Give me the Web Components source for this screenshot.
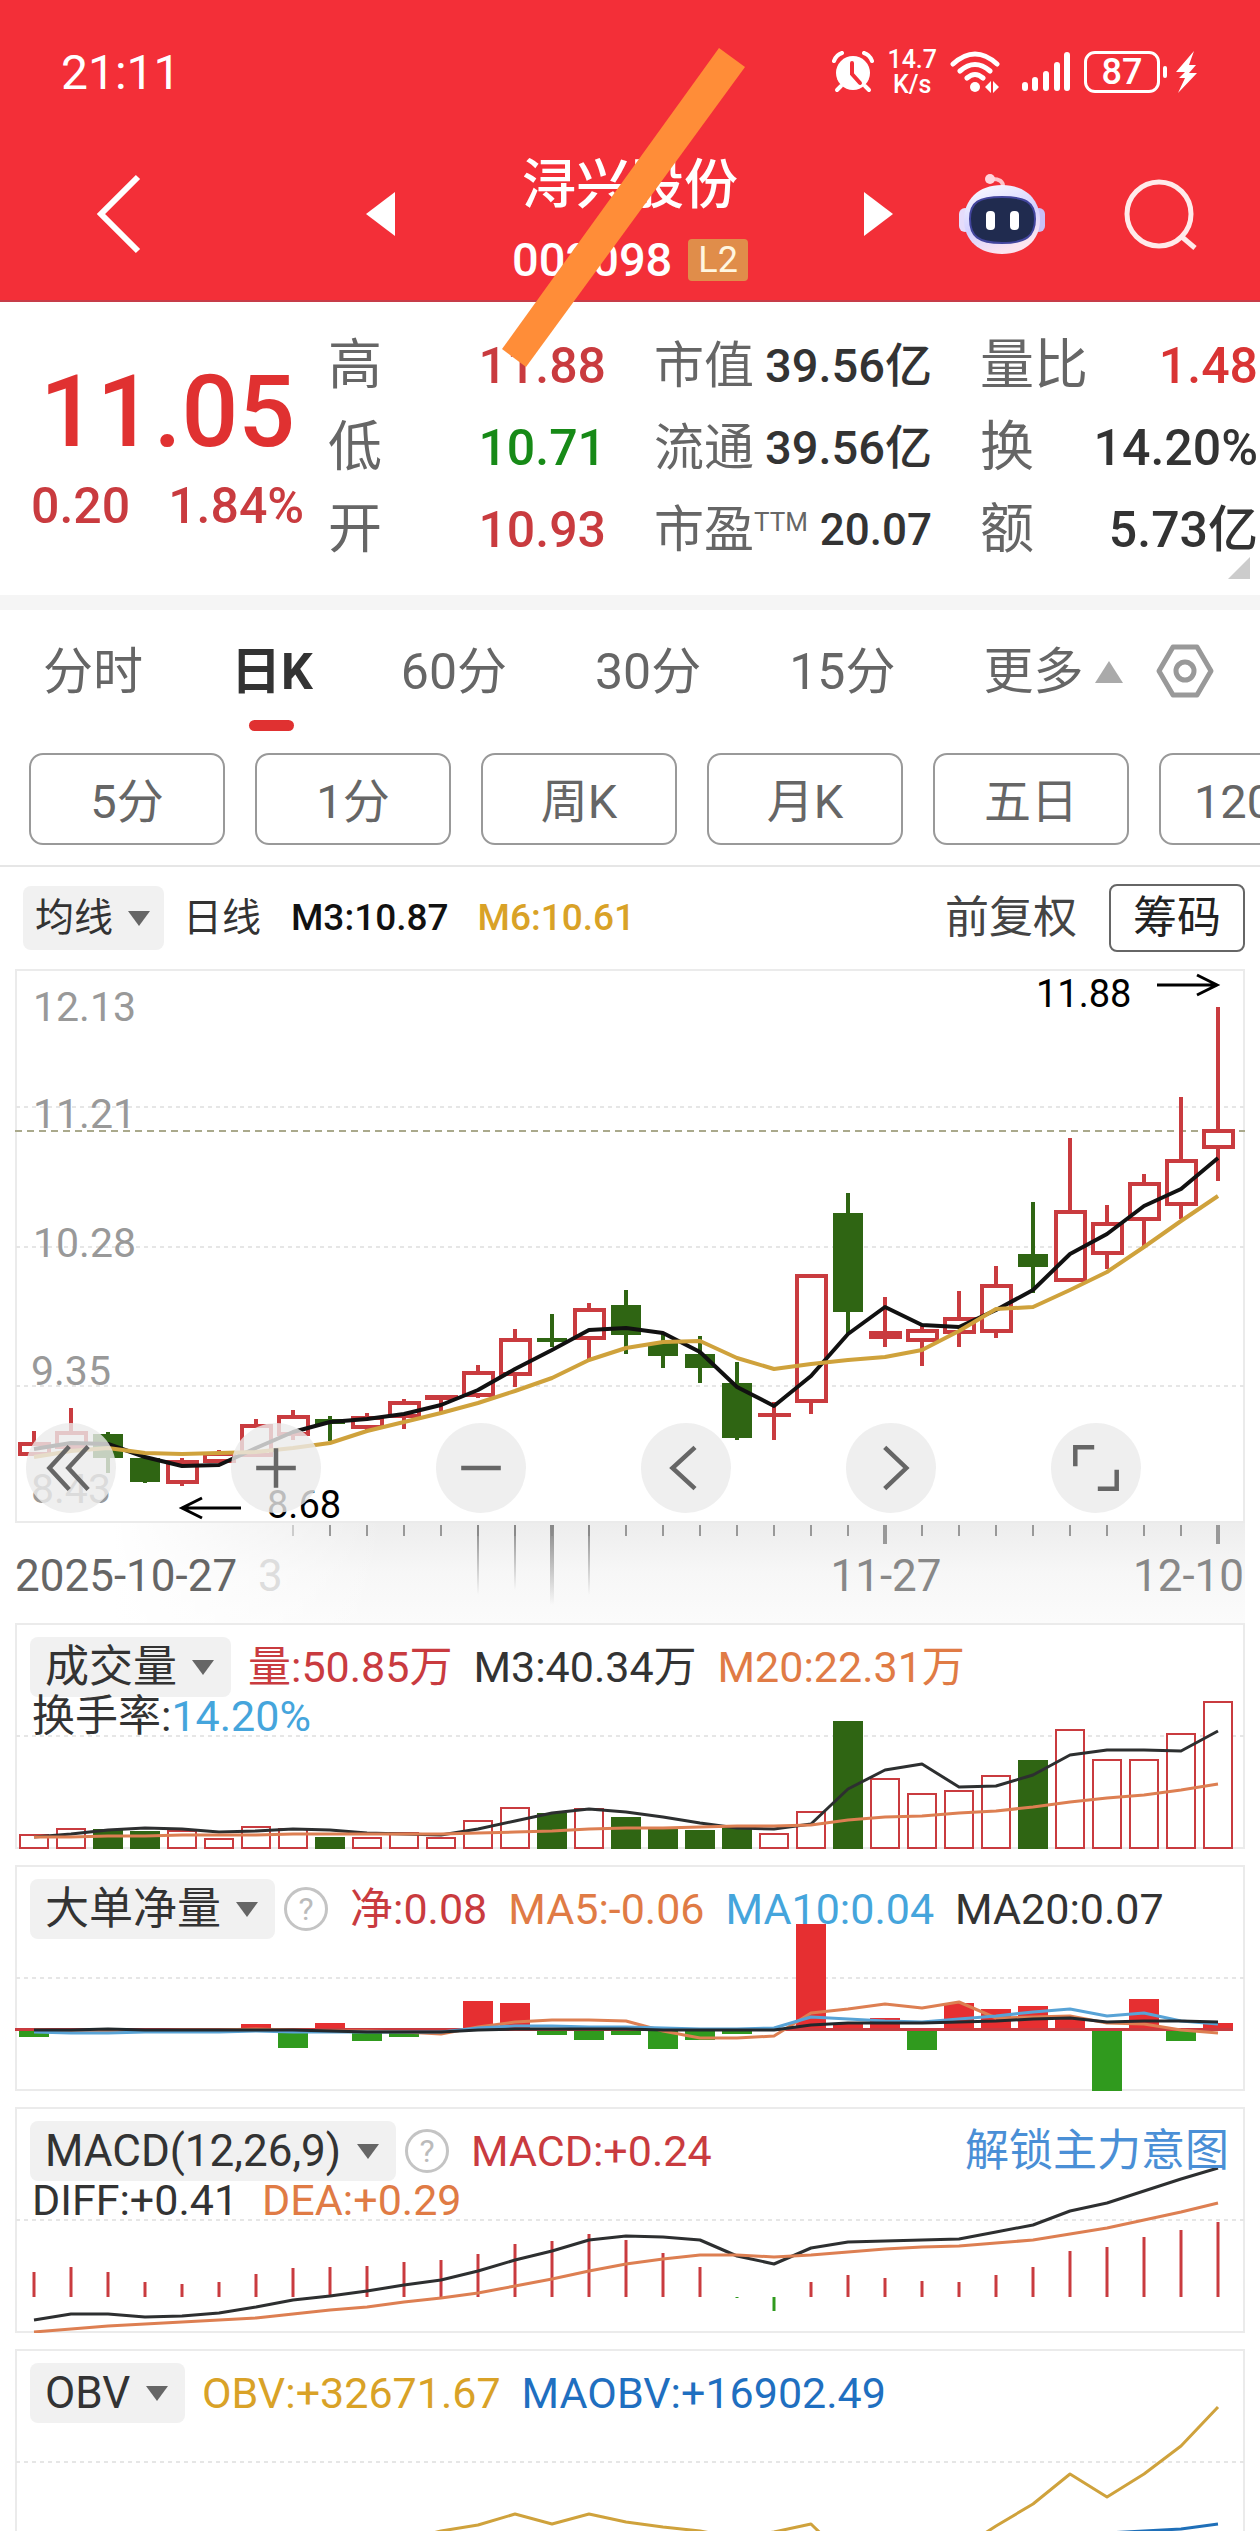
<!DOCTYPE html>
<html lang="zh-CN">
<head>
<meta charset="utf-8">
<meta name="viewport" content="width=device-width, initial-scale=1">
<title>浔兴股份 002098</title>
<style>
  body {
    margin: 0;
    background: #fff;
    color: #333;
    font-family: Roboto, "Noto Sans CJK SC", sans-serif;
  }
</style>
</head>
<body>
<stock-app></stock-app>

<script>
const RED = "#c93b3f";
const GREEN = "#2f6513";
const STEP = 37;
const barX = (i) => 34 + STEP * i;

// points is a list of y values, one per trading day
const line = (points, color, width = 4, from = 0) =>
  `<polyline fill="none" stroke="${color}" stroke-width="${width}" stroke-linejoin="round" points="${points
    .map((y, i) => `${barX(i + from)},${y}`)
    .join(" ")}"/>`;

const grid = (y) =>
  `<line x1="16" x2="1244" y1="${y}" y2="${y}" stroke="#e6e6e6" stroke-width="2" stroke-dasharray="4 4"/>`;

class BaseElement extends HTMLElement {
  constructor() {
    super();
    this.attachShadow({ mode: "open" });
  }

  connectedCallback() {
    this.shadowRoot.innerHTML = `<style>${this.styles()}</style>${this.render()}`;
  }

  styles() {
    return ":host { display: block; }";
  }

  render() {
    return "<slot></slot>";
  }
}

class StatusBar extends BaseElement {
  styles() {
    return `
      :host { display: flex; align-items: center; justify-content: space-between; height: 56px; padding: 44px 62px 0 61px; color: #fff; }
      time { font-size: 48px; }
      .icons { display: flex; align-items: center; gap: 13px; }
      .speed { font-size: 25px; line-height: 26px; text-align: center; font-weight: 500; }
      .speed div { height: 25px; }
      .battery { display: flex; align-items: center; gap: 3px; }
      .level { box-sizing: border-box; width: 76px; height: 42px; border: 3px solid #fff; border-radius: 11px; font-size: 36px; line-height: 37px; text-align: center; font-weight: 500; }
      .nub { width: 4px; height: 12px; border-radius: 2px; background: #fff; }
      .signal { margin-left: 8px; }
      svg { display: block; }
    `;
  }

  render() {
    return `
      <time>21:11</time>
      <div class="icons">
        <svg width="42" height="42" viewBox="0 0 42 42" fill="none" stroke="#fff">
          <circle cx="21" cy="22" r="17" fill="#fff" stroke="none"/>
          <path d="M2 10Q4 4 10 2M40 10Q38 4 32 2" stroke-width="4" stroke-linecap="round"/>
          <path d="M9 35L5 39M33 35L37 39" stroke-width="4" stroke-linecap="round"/>
          <path d="M20 12V23L28 32" stroke="#f32f38" stroke-width="4" stroke-linecap="round"/>
        </svg>
        <div class="speed"><div>14.7</div><div>K/s</div></div>
        <svg width="50" height="42" viewBox="0 0 50 42" fill="none" stroke="#fff" stroke-width="5" stroke-linecap="round">
          <path d="M3 13Q25 -7 47 13M10 20Q25 7 40 20M17 27Q25 20 33 27"/>
          <circle cx="25" cy="36" r="5" fill="#fff" stroke="none"/>
          <path d="M41 30v12l-6-6zM43 30v12l6-6z" fill="#fff" stroke="none"/>
        </svg>
        <svg class="signal" width="50" height="42" viewBox="0 0 50 42" stroke="#fff" stroke-width="6" stroke-linecap="round">
          <path d="M4 34V37M14 29V37M25 23V37M36 14V37M46 4V37"/>
        </svg>
        <div class="battery"><div class="level">87</div><div class="nub"></div>
          <svg width="28" height="44" viewBox="2 0 28 44" fill="#fff"><path d="M26 1L8 22h9l-6 6h6L10 43l19-20h-8l7-8h-7z"/></svg>
        </div>
      </div>
    `;
  }
}

class StockHeader extends BaseElement {
  styles() {
    return `
      :host { display: grid; grid-template-columns: 1fr auto 1fr; align-items: center; height: 200px; border-bottom: 2px solid #c73c49; color: #fff; }
      button { display: block; border: 0; padding: 0; background: none; color: inherit; }
      svg { display: block; }
      .side { display: flex; align-items: center; justify-content: space-between; }
      .left { padding: 28px 117px 0 94px; }
      .right { padding: 28px 61px 0 116px; }
      .right .robot { padding-right: 12px; }
      .title { text-align: center; padding-top: 44px; }
      h1 { margin: 0; font-size: 54px; line-height: 76px; font-weight: 500; }
      .code { display: flex; justify-content: center; align-items: center; gap: 16px; font-size: 47px; line-height: 72px; font-weight: 500; }
      .badge { padding: 0 10px; border-radius: 4px; background: #e08d4a; color: #fff6e0; font-size: 36px; line-height: 42px; font-weight: 400; }
    `;
  }

  render() {
    return `
      <div class="side left">
        <button aria-label="返回"><svg width="48" height="80" viewBox="0 0 48 80" fill="none" stroke="#fff" stroke-width="6"><path d="M44 3L7 40L44 77"/></svg></button>
        <button aria-label="上一只"><svg width="29" height="44" viewBox="0 0 29 44" fill="#fff"><path d="M29 0V44L0 22z"/></svg></button>
      </div>
      <div class="title">
        <h1>浔兴股份</h1>
        <div class="code"><span>002098</span><span class="badge">L2</span></div>
      </div>
      <div class="side right">
        <button aria-label="下一只"><svg width="29" height="44" viewBox="0 0 29 44" fill="#fff"><path d="M0 0V44L29 22z"/></svg></button>
        <button class="robot" aria-label="智能助手">
          <svg width="88" height="82" viewBox="0 0 88 82">
            <defs><linearGradient id="shell" x1="0" y1="0" x2="0.4" y2="1"><stop offset="0" stop-color="#fff"/><stop offset="0.6" stop-color="#d3d0ff"/><stop offset="1" stop-color="#fbe4f0"/></linearGradient></defs>
            <path d="M45 15Q46 5 32 6" fill="none" stroke="#ffc4cb" stroke-width="4"/>
            <circle cx="32" cy="6" r="5" fill="#ffd5dc"/>
            <rect x="1" y="35" width="12" height="24" rx="6" fill="#e5dcfb"/>
            <rect x="75" y="35" width="12" height="24" rx="6" fill="#c9bff6"/>
            <path d="M44 12C68 12 82 27 82 47S67 81 44 81S6 67 6 47S20 12 44 12z" fill="url(#shell)"/>
            <path d="M44 24C67 24 77 29 77 46S68 70 44 70S12 63 12 46S21 24 44 24z" fill="#202b4f" stroke="#42459d" stroke-width="2"/>
            <rect x="28" y="38" width="9" height="19" rx="4" fill="#fff"/>
            <rect x="52" y="38" width="9" height="19" rx="4" fill="#fff"/>
          </svg>
        </button>
        <button aria-label="搜索"><svg width="76" height="72" viewBox="0 0 76 72" fill="none" stroke="#ffeaea" stroke-width="5"><circle cx="36" cy="36" r="32"/><path d="M59 59L72 70"/></svg></button>
      </div>
    `;
  }
}

class StatItem extends BaseElement {
  styles() {
    return `
      :host { display: flex; justify-content: space-between; align-items: center; white-space: nowrap; line-height: 82px; }
      .label { color: #666; font-size: 54px; }
      .value { color: var(--tone, #333); font-size: 50px; font-weight: 500; }
      :host([compact]) .label { font-size: 50px; }
      :host([compact]) .value { font-size: 47px; }
      :host([note]) .value { font-size: 44px; }
      sup { font-size: 26px; line-height: 26px; vertical-align: 16px; }
    `;
  }

  render() {
    const note = this.getAttribute("note");
    return `<span class="label">${this.getAttribute("label")}${note ? `<sup>${note}</sup>` : ""}</span><span class="value"><slot></slot></span>`;
  }
}

class QuoteSummary extends BaseElement {
  styles() {
    return `
      :host { display: grid; grid-template-columns: 280px 1fr 1fr 1fr; gap: 48px; padding: 23px 2px 24px 0; position: relative; border-bottom: 15px solid #f5f5f5; }
      .price { color: #e03131; font-size: 100px; line-height: 100px; font-weight: 500; text-align: center; padding: 37px 0 0 40px; }
      .change { display: flex; gap: 38px; padding-left: 31px; color: ${RED}; font-size: 50px; line-height: 88px; font-weight: 500; white-space: nowrap; }
      .corner { position: absolute; right: 10px; bottom: 16px; width: 22px; height: 22px; background: #ccc; clip-path: polygon(100% 0, 100% 100%, 0 100%); }
    `;
  }

  render() {
    return `
      <div>
        <div class="price">11.05</div>
        <div class="change"><span>0.20</span><span>1.84%</span></div>
      </div>
      <div>
        <stat-item label="高" style="--tone: ${RED}">11.88</stat-item>
        <stat-item label="低" style="--tone: #178a17">10.71</stat-item>
        <stat-item label="开" style="--tone: ${RED}">10.93</stat-item>
      </div>
      <div>
        <stat-item compact label="市值">39.56亿</stat-item>
        <stat-item compact label="流通">39.56亿</stat-item>
        <stat-item compact label="市盈" note="TTM">20.07</stat-item>
      </div>
      <div>
        <stat-item label="量比" style="--tone: #d93434">1.48</stat-item>
        <stat-item label="换">14.20%</stat-item>
        <stat-item label="额">5.73亿</stat-item>
      </div>
      <div class="corner"></div>
    `;
  }
}

class PeriodTabs extends BaseElement {
  styles() {
    return `
      :host { display: block; border-bottom: 2px solid #e6e6e6; overflow: hidden; }
      button { font: inherit; color: #666; background: none; border: 0; padding: 0; white-space: nowrap; flex: none; }
      nav { display: flex; align-items: flex-start; gap: 88px; padding: 0 43px; height: 143px; }
      nav button { display: grid; justify-items: center; font-size: 50px; line-height: 124px; }
      nav .on { color: #333; font-weight: 700; grid-template-rows: 110px 11px; }
      nav .on::after { content: ""; width: 45px; height: 11px; border-radius: 6px; background: #e03131; }
      nav .more { display: flex; align-items: center; gap: 12px; }
      nav .gear { margin-left: -55px; height: 122px; align-items: center; }
      .pills { display: flex; gap: 30px; padding: 0 29px 20px; }
      .pills button { box-sizing: border-box; width: 196px; height: 92px; padding-bottom: 4px; border: 2px solid #999; border-radius: 14px; font-size: 47px; }
      svg { display: block; }
    `;
  }

  render() {
    const tabs = ["分时", "日K", "60分", "30分", "15分"];
    const pills = ["5分", "1分", "周K", "月K", "五日", "120分"];
    return `
      <nav>
        ${tabs.map((t) => `<button class="${t === "日K" ? "on" : ""}">${t}</button>`).join("")}
        <button class="more">更多<svg width="28" height="22" viewBox="0 0 28 22"><path d="M14 0L28 22H0z" fill="#aaa"/></svg></button>
        <button class="gear" aria-label="设置"><svg width="58" height="56" viewBox="0 0 58 56" fill="none" stroke="#999" stroke-width="5"><path d="M17 4H41L55 28L41 52H17L3 28z" stroke-linejoin="round"/><circle cx="29" cy="28" r="9"/></svg></button>
      </nav>
      <div class="pills">${pills.map((p) => `<button>${p}</button>`).join("")}</div>
    `;
  }
}

class DropTag extends BaseElement {
  styles() {
    return `
      :host { display: inline-grid; flex: none; align-items: center; }
      select { grid-area: 1 / 1; appearance: none; margin: 0; border: 0; border-radius: 8px; background: #f1f1f1; color: #333; font: inherit; height: var(--tag-height, 60px); padding: 0 54px 0 15px; }
      svg { grid-area: 1 / 1; justify-self: end; margin-right: 17px; pointer-events: none; }
      :host([small]) select { padding: 0 50px 0 12px; }
      :host([small]) svg { margin-right: 14px; }
    `;
  }

  render() {
    const label = this.getAttribute("label");
    return `<select aria-label="指标"><option>${label}</option></select>
      <svg width="22" height="15" viewBox="0 0 22 15"><path d="M0 0H22L11 15z" fill="#666"/></svg>`;
  }
}

class HelpButton extends BaseElement {
  styles() {
    return `
      :host { display: block; flex: none; }
      button { box-sizing: border-box; display: block; width: 44px; height: 44px; padding: 0; border: 3px solid #c4c4c4; border-radius: 50%; background: none; color: #bbb; font: inherit; font-size: 32px; line-height: 38px; }
    `;
  }

  render() {
    return `<button aria-label="说明">?</button>`;
  }
}

class AverageBar extends BaseElement {
  styles() {
    return `
      :host { display: flex; align-items: center; height: 102px; padding: 0 15px 0 23px; font-size: 37px; line-height: 64px; white-space: nowrap; font-weight: 500; }
      drop-tag { --tag-height: 64px; font-size: 39px; font-weight: 400; margin-right: 19px; }
      .day { margin-right: 30px; font-size: 39px; font-weight: 400; }
      .m3 { color: #111; margin-right: 29px; }
      .m6 { color: #d9a227; }
      .adjust { margin-left: auto; margin-right: 32px; color: #444; font-size: 44px; font-weight: 400; }
      button { box-sizing: border-box; width: 136px; height: 68px; padding: 0; border: 2px solid #666; border-radius: 8px; background: none; color: #222; font: inherit; font-size: 44px; font-weight: 400; }
    `;
  }

  render() {
    return `<drop-tag small label="均线"></drop-tag><span class="day">日线</span><span class="m3">M3:10.87</span><span class="m6">M6:10.61</span>
      <span class="adjust">前复权</span><button>筹码</button>`;
  }
}

// u = up, d = down; then high, body top, body bottom, low
const CANDLES = [
  ["u", 1431, 1442, 1456, 1456], ["u", 1408, 1431, 1449, 1449], ["d", 1432, 1434, 1458, 1473],
  ["d", 1458, 1458, 1482, 1483], ["u", 1458, 1460, 1484, 1486], ["u", 1450, 1452, 1463, 1463],
  ["u", 1419, 1424, 1457, 1457], ["u", 1410, 1415, 1436, 1440], ["d", 1416, 1419, 1424, 1441],
  ["u", 1413, 1416, 1429, 1430], ["u", 1399, 1401, 1418, 1429], ["u", 1395, 1395, 1400, 1412],
  ["u", 1365, 1371, 1397, 1398], ["u", 1329, 1338, 1376, 1387], ["d", 1314, 1338, 1342, 1347],
  ["u", 1303, 1308, 1340, 1359], ["d", 1290, 1305, 1335, 1354], ["d", 1333, 1343, 1356, 1368],
  ["d", 1336, 1354, 1368, 1383], ["d", 1362, 1383, 1438, 1440], ["u", 1402, 1413, 1417, 1440],
  ["u", 1274, 1274, 1403, 1414], ["d", 1193, 1213, 1312, 1334], ["u", 1297, 1331, 1339, 1347],
  ["u", 1326, 1329, 1342, 1366], ["u", 1291, 1317, 1334, 1347], ["u", 1266, 1284, 1333, 1338],
  ["d", 1202, 1254, 1267, 1293], ["u", 1138, 1210, 1282, 1282], ["u", 1205, 1222, 1255, 1269],
  ["u", 1174, 1182, 1221, 1246], ["u", 1097, 1159, 1206, 1219], ["u", 1007, 1129, 1149, 1181],
];
const MA3 = [1449, 1443, 1444, 1457, 1466, 1465, 1448, 1432, 1422, 1419, 1414, 1405, 1390, 1369, 1350, 1330, 1328, 1333, 1352, 1387, 1406, 1376, 1334, 1307, 1325, 1327, 1310, 1290, 1254, 1234, 1206, 1189, 1158];
const MA6 = [1457, 1451, 1448, 1453, 1454, 1453, 1452, 1448, 1443, 1431, 1422, 1413, 1403, 1391, 1378, 1360, 1348, 1342, 1341, 1358, 1369, 1364, 1360, 1357, 1350, 1331, 1309, 1307, 1290, 1272, 1247, 1221, 1196];

class CandleChart extends BaseElement {
  styles() {
    return `
      :host { display: block; position: relative; box-shadow: inset 0 0 0 2px #ebebeb; }
      svg { display: block; width: 100%; height: auto; }
      .tools { position: absolute; left: 11px; right: 104px; bottom: 10px; display: flex; justify-content: space-between; }
      .tools button { width: 90px; height: 90px; padding: 0; border: 0; border-radius: 50%; background: #ebebebcc; }
    `;
  }

  candle([dir, high, top, bottom, low], i) {
    const x = barX(i);
    const up = dir === "u";
    const color = up ? RED : GREEN;
    const wicks = `<path d="M${x} ${high}V${top}M${x} ${bottom}V${low}" stroke="${color}" stroke-width="4"/>`;
    if (!up) return wicks + `<rect x="${x - 15}" y="${top}" width="30" height="${bottom - top}" fill="${color}"/>`;
    if (bottom - top < 9) return wicks + `<rect x="${x - 16}" y="${top}" width="33" height="${bottom - top}" fill="${color}"/>`;
    return wicks + `<rect x="${x - 14}" y="${top + 2}" width="29" height="${bottom - top - 4}" fill="#fff" stroke="${color}" stroke-width="4"/>`;
  }

  render() {
    const labels = [[33, 1021, "12.13"], [33, 1128, "11.21"], [33, 1257, "10.28"], [31, 1385, "9.35"], [31, 1503, "8.43"]];
    const icons = [
      ["更早", "M48 26L26 50L48 74M69 26L47 50L69 74"],
      ["放大", "M50 28V72M28 50H72"],
      ["缩小", "M28 50H72"],
      ["左移", "M60 27L35 50L60 73"],
      ["右移", "M43 27L67 50L43 73"],
      ["全屏", "M27 48V27H48M73 52V73H52"],
    ];
    return `
      <svg viewBox="15 969 1230 554">
        ${[1107, 1247, 1386].map(grid).join("")}
        <g fill="#999" font-size="41">${labels.map(([x, y, t]) => `<text x="${x}" y="${y}">${t}</text>`).join("")}</g>
        <line x1="15" x2="1245" y1="1131" y2="1131" stroke="#aaa98c" stroke-width="2" stroke-dasharray="7 5"/>
        ${CANDLES.map((c, i) => this.candle(c, i)).join("")}
        ${line(MA3, "#111")}
        ${line(MA6, "#cfa23c")}
        <g font-size="38" fill="#000"><text x="1036" y="1007">11.88</text><text x="267" y="1518">8.68</text></g>
        <path d="M1157 985H1216M1197 975L1217 985L1197 995M241 1508H183M202 1498L182 1508L202 1518" fill="none" stroke="#000" stroke-width="3"/>
      </svg>
      <div class="tools">
        ${icons.map(([name, d]) => `<button aria-label="${name}"><svg viewBox="0 0 100 100" fill="none" stroke="#666" stroke-width="5"><path d="${d}"/></svg></button>`).join("")}
      </div>
    `;
  }
}

class DateAxis extends BaseElement {
  styles() {
    return `
      :host { display: block; background: linear-gradient(90deg, #fff 8%, transparent 30%), linear-gradient(#ededed, #f7f7f7 50%, #fbfbfb); }
      svg { display: block; width: 100%; height: auto; }
    `;
  }

  render() {
    let ticks = "";
    for (let i = 7; i < 33; i++) {
      const major = i === 23 || i === 32;
      ticks += `<path d="M${barX(i)} 1525v${major ? 19 : 11}" stroke="${i < 8 ? "#ccc" : "#999"}" stroke-width="${major ? 4 : 2}"/>`;
    }
    const trails = [[12, 70, 2], [13, 65, 2], [14, 80, 4], [15, 70, 2]]
      .map(([i, h, w]) => `<rect x="${barX(i) - w / 2}" y="1525" width="${w}" height="${h}" fill="url(#fade)"/>`)
      .join("");
    return `
      <svg viewBox="15 1523 1230 100">
        <defs><linearGradient id="fade" x1="0" y1="0" x2="0" y2="1"><stop offset="0" stop-color="#888"/><stop offset="1" stop-color="#888" stop-opacity="0"/></linearGradient></defs>
        ${ticks}${trails}
        <g font-size="44" fill="#888">
          <text x="258" y="1591" fill="#ddd">3</text>
          <text x="15" y="1591" fill="#666">2025-10-27</text>
          <text x="886" y="1591" text-anchor="middle">11-27</text>
          <text x="1244" y="1591" text-anchor="end">12-10</text>
        </g>
      </svg>
    `;
  }
}

// Frame shared by all sub-charts: a chart with its legend laid over it
class IndicatorPanel extends BaseElement {
  styles() {
    return `
      :host { display: grid; flex: none; box-shadow: inset 0 0 0 2px #ebebeb; font-size: 43px; white-space: nowrap; }
      .chart, .legend { grid-area: 1 / 1; min-width: 0; }
      .legend { padding: 14px 16px 0 15px; }
      .row { display: flex; align-items: center; height: 60px; line-height: 60px; }
      .more { display: flex; align-items: center; gap: 24px; height: 38px; line-height: 38px; padding-left: 2px; }
      ::slotted(drop-tag) { margin-right: 17px; font-size: 44px; }
      ::slotted(help-button) { margin-right: 22px; margin-left: -8px; }
      ::slotted(span) { margin-right: 21px; }
      ::slotted(a) { margin-left: auto; color: #4a8fd6; text-decoration: none; font-size: 44px; }
      ::slotted([slot="more"]) { margin-right: 0; }
    `;
  }

  render() {
    return `<div class="chart"><slot name="chart"></slot></div>
      <div class="legend"><div class="row"><slot></slot></div><div class="more"><slot name="more"></slot></div></div>`;
  }
}

class SubChart extends BaseElement {
  styles() {
    return `
      :host { display: block; }
      svg { display: block; width: 100%; height: auto; }
    `;
  }

  frame(top, middle, body) {
    return `<svg viewBox="15 ${top} 1230 226">${grid(middle)}${body}</svg>`;
  }
}

class VolumeChart extends SubChart {
  render() {
    const tops = [1834, 1828, 1829, 1831, 1830, 1838, 1826, 1828, 1837, 1837, 1832, 1837, 1820, 1807, 1813, 1808, 1817, 1828, 1830, 1828, 1833, 1811, 1721, 1778, 1793, 1790, 1775, 1760, 1729, 1759, 1759, 1733, 1701];
    const down = [2, 3, 8, 14, 16, 17, 18, 19, 22, 27];
    const m3 = [1837, 1834, 1830, 1828, 1829, 1832, 1831, 1829, 1830, 1833, 1834, 1835, 1829, 1821, 1813, 1809, 1812, 1817, 1823, 1828, 1829, 1824, 1789, 1770, 1764, 1787, 1786, 1775, 1755, 1750, 1750, 1751, 1731];
    const m20 = [1837, 1837, 1836, 1836, 1835, 1835, 1835, 1834, 1834, 1834, 1834, 1834, 1833, 1832, 1831, 1829, 1828, 1828, 1827, 1826, 1826, 1825, 1820, 1817, 1816, 1813, 1811, 1807, 1802, 1798, 1795, 1790, 1784];
    const bars = tops.map((y, i) =>
      down.includes(i)
        ? `<rect x="${barX(i) - 15}" y="${y}" width="30" height="${1849 - y}" fill="${GREEN}"/>`
        : `<rect x="${barX(i) - 14}" y="${y + 1}" width="28" height="${1847 - y}" fill="#fff" stroke="${RED}" stroke-width="2"/>`
    );
    return this.frame(1623, 1736, bars.join("") + line(m3, "#2d2f30", 3) + line(m20, "#dd7f52", 3));
  }
}

class NetFlowChart extends SubChart {
  render() {
    const base = 2031;
    const ends = { 0: 2037, 6: 2024, 7: 2048, 8: 2023, 9: 2041, 10: 2037, 12: 2001, 13: 2003, 14: 2035, 15: 2040, 16: 2035, 17: 2049, 18: 2040, 19: 2034, 21: 1924, 22: 2023, 23: 2018, 24: 2050, 25: 2003, 26: 2009, 27: 2006, 28: 2019, 29: 2091, 30: 1999, 31: 2041, 32: 2023 };
    const ma5 = [2030, 2031, 2031, 2031, 2030, 2030, 2029, 2030, 2031, 2031, 2032, 2034, 2027, 2022, 2020, 2020, 2021, 2031, 2038, 2038, 2036, 2013, 2009, 2004, 2008, 2002, 2018, 2017, 2016, 2023, 2024, 2030, 2033];
    const ma10 = [2032, 2033, 2033, 2032, 2032, 2032, 2031, 2032, 2032, 2032, 2032, 2032, 2028, 2026, 2026, 2027, 2027, 2028, 2029, 2029, 2028, 2017, 2019, 2021, 2022, 2019, 2016, 2012, 2009, 2016, 2013, 2021, 2024];
    const ma20 = [2030, 2030, 2029, 2030, 2030, 2030, 2030, 2030, 2031, 2032, 2032, 2032, 2030, 2029, 2029, 2029, 2029, 2030, 2030, 2030, 2030, 2025, 2023, 2023, 2023, 2022, 2021, 2019, 2018, 2022, 2021, 2021, 2022];
    const bars = Object.entries(ends).map(([i, y]) =>
      `<rect x="${barX(+i) - 15}" y="${Math.min(y, base)}" width="30" height="${Math.abs(y - base)}" fill="${y < base ? "#e62f31" : "#309a1e"}"/>`
    );
    const zero = `<rect x="15" y="2028" width="1218" height="3" fill="${RED}"/>`;
    return this.frame(1865, 1978, bars.join("") + zero + line(ma5, "#dd7f52", 3) + line(ma10, "#58a3d6", 3) + line(ma20, "#22282c", 3));
  }
}

class MacdChart extends SubChart {
  render() {
    const ends = [2272, 2267, 2272, 2282, 2284, 2282, 2274, 2268, 2267, 2266, 2262, 2260, 2254, 2244, 2241, 2234, 2240, 2253, 2267, 2298, 2311, 2282, 2275, 2278, 2281, 2282, 2275, 2267, 2251, 2247, 2237, 2230, 2222];
    const diff = [2320, 2314, 2314, 2317, 2316, 2313, 2307, 2300, 2296, 2291, 2285, 2280, 2271, 2260, 2251, 2240, 2236, 2237, 2240, 2256, 2264, 2248, 2242, 2241, 2240, 2239, 2232, 2225, 2211, 2203, 2191, 2179, 2168];
    const dea = [2332, 2329, 2326, 2324, 2322, 2320, 2318, 2314, 2310, 2307, 2302, 2298, 2293, 2286, 2279, 2271, 2264, 2259, 2255, 2255, 2257, 2255, 2252, 2249, 2247, 2246, 2243, 2240, 2234, 2228, 2220, 2212, 2203];
    const bars = ends.map((y, i) => `<path d="M${barX(i)} 2297V${y}" stroke="${y < 2297 ? RED : "#309a1e"}" stroke-width="3"/>`);
    return this.frame(2107, 2220, bars.join("") + line(diff, "#2d2f30", 3) + line(dea, "#dd7f52", 3));
  }
}

class ObvChart extends SubChart {
  render() {
    const obv = [2540, 2531, 2525, 2514, 2524, 2514, 2522, 2527, 2531, 2538, 2532, 2524, 2560, 2566, 2562, 2550, 2526, 2504, 2474, 2497, 2474, 2446, 2407];
    const average = [2533, 2531, 2529, 2524];
    return this.frame(2349, 2462, line(obv, "#cfa23c", 3, 10) + line(average, "#1f6fb8", 3, 29));
  }
}

class StockApp extends BaseElement {
  styles() {
    return `
      :host { display: flex; flex-direction: column; position: relative; height: 100vh; overflow: hidden; }
      header { background: #f32f38; }
      header, quote-summary, period-tabs, average-bar, main { flex: none; }
      main { padding: 0 15px; display: flex; flex-direction: column; }
      .panels { display: flex; flex-direction: column; gap: 16px; }
      .mark { position: absolute; left: 502px; top: 48px; width: 243px; height: 319px; pointer-events: none; }
    `;
  }

  render() {
    const red = `style="color: ${RED}"`;
    const orange = `style="color: #e07b45"`;
    return `
      <header><status-bar></status-bar><stock-header></stock-header></header>
      <quote-summary></quote-summary>
      <period-tabs></period-tabs>
      <average-bar></average-bar>
      <main>
        <candle-chart></candle-chart>
        <date-axis></date-axis>
        <div class="panels">
          <indicator-panel>
            <drop-tag label="成交量"></drop-tag>
            <span ${red}>量:50.85万</span><span>M3:40.34万</span><span ${orange}>M20:22.31万</span>
            <span slot="more">换手率:<b style="font-weight: 400; color: #45a5dc">14.20%</b></span>
            <volume-chart slot="chart"></volume-chart>
          </indicator-panel>
          <indicator-panel>
            <drop-tag label="大单净量"></drop-tag><help-button></help-button>
            <span ${red}>净:0.08</span><span ${orange}>MA5:-0.06</span><span style="color: #45a5dc">MA10:0.04</span><span>MA20:0.07</span>
            <net-flow-chart slot="chart"></net-flow-chart>
          </indicator-panel>
          <indicator-panel>
            <drop-tag label="MACD(12,26,9)"></drop-tag><help-button></help-button>
            <span ${red}>MACD:+0.24</span>
            <a href="#">解锁主力意图</a>
            <span slot="more">DIFF:+0.41</span><span slot="more" ${orange}>DEA:+0.29</span>
            <macd-chart slot="chart"></macd-chart>
          </indicator-panel>
          <indicator-panel>
            <drop-tag label="OBV"></drop-tag>
            <span style="color: #d9a227">OBV:+32671.67</span><span style="color: #1f6fc0">MAOBV:+16902.49</span>
            <obv-chart slot="chart"></obv-chart>
          </indicator-panel>
        </div>
      </main>
      <svg class="mark" viewBox="502 48 243 319"><path d="M719 48L745 67L526 367L502 349z" fill="#ff8d38"/></svg>
    `;
  }
}

customElements.define("status-bar", StatusBar);
customElements.define("stock-header", StockHeader);
customElements.define("stat-item", StatItem);
customElements.define("quote-summary", QuoteSummary);
customElements.define("period-tabs", PeriodTabs);
customElements.define("drop-tag", DropTag);
customElements.define("help-button", HelpButton);
customElements.define("average-bar", AverageBar);
customElements.define("candle-chart", CandleChart);
customElements.define("date-axis", DateAxis);
customElements.define("indicator-panel", IndicatorPanel);
customElements.define("volume-chart", VolumeChart);
customElements.define("net-flow-chart", NetFlowChart);
customElements.define("macd-chart", MacdChart);
customElements.define("obv-chart", ObvChart);
customElements.define("stock-app", StockApp);
</script>
</body>
</html>
